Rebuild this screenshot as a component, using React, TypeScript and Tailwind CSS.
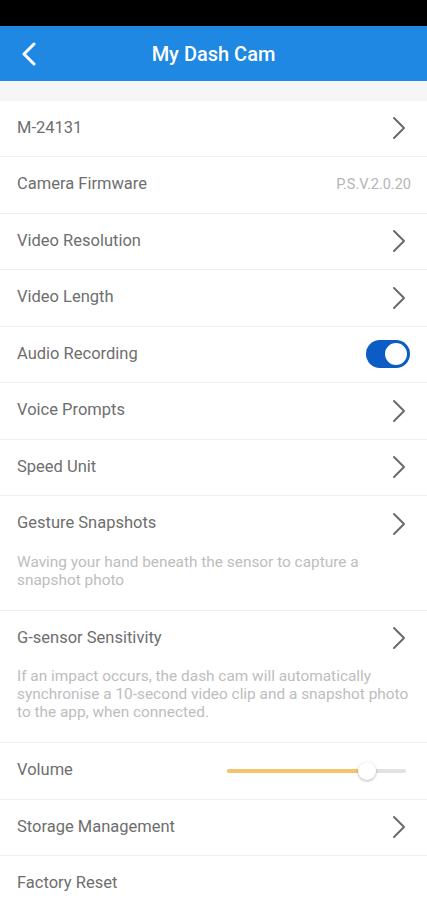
import React from "react";

const Chevron = () => (
  <svg width="14" height="24" viewBox="0 0 14 24" fill="none">
    <path d="M2 2 L12 12 L2 22" stroke="#6b6b6b" strokeWidth="2" strokeLinecap="round" strokeLinejoin="round" />
  </svg>
);

const Row = ({ label, right, desc }: { label: string; right?: React.ReactNode; desc?: string }) => (
  <div className="border-b border-[#f0f0f0]">
    <div className="h-[55.5px] flex items-center justify-between pl-[17px] pr-[21px]">
      <span className="text-[16.5px] text-[#6e6e6e]">{label}</span>
      {right}
    </div>
    {desc && (
      <div className="pl-[17px] pr-[14px] mt-[1px] pb-[21px] text-[15.4px] leading-[18px] text-[#bdbdbd]">{desc}</div>
    )}
  </div>
);

export default function App() {
  return (
    <div className="w-[427px] h-[900px] overflow-hidden bg-white" style={{ fontFamily: "Roboto, 'Noto Sans', sans-serif" }}>
      <div className="h-[26px] bg-black" />
      <div className="h-[55px] bg-[#1e88e2] relative flex items-center justify-center">
        <svg className="absolute left-[20px] top-[16px]" width="18" height="24" viewBox="0 0 18 24" fill="none">
          <path d="M14 2 L4 12 L14 22" stroke="white" strokeWidth="3" strokeLinecap="round" strokeLinejoin="round" />
        </svg>
        <span className="text-white text-[20px] font-medium">My Dash Cam</span>
      </div>
      <div className="h-[19.5px] bg-[#f6f6f6]" />
      <Row label="M-24131" right={<Chevron />} />
      <Row label="Camera Firmware" right={<span className="text-[14.5px] text-[#b5b5b5] -mr-[5px]">P.S.V.2.0.20</span>} />
      <Row label="Video Resolution" right={<Chevron />} />
      <Row label="Video Length" right={<Chevron />} />
      <Row
        label="Audio Recording"
        right={
          <div className="w-[44px] h-[28px] rounded-full bg-[#0b5cc5] relative -mr-[4px]">
            <div className="absolute right-[1px] top-[1px] w-[26px] h-[26px] rounded-full bg-white border-[2px] border-[#0b5cc5]" />
          </div>
        }
      />
      <Row label="Voice Prompts" right={<Chevron />} />
      <Row label="Speed Unit" right={<Chevron />} />
      <Row label="Gesture Snapshots" right={<Chevron />} desc="Waving your hand beneath the sensor to capture a snapshot photo" />
      <Row
        label="G-sensor Sensitivity"
        right={<Chevron />}
        desc="If an impact occurs, the dash cam will automatically synchronise a 10-second video clip and a snapshot photo to the app, when connected."
      />
      <Row
        label="Volume"
        right={
          <div className="relative w-[179px] h-[20px]">
            <div className="absolute left-0 right-0 top-[8px] h-[4px] rounded-full bg-[#e2e2e2]" />
            <div className="absolute left-0 w-[140px] top-[8px] h-[4px] rounded-full bg-[#f5c46a]" />
            <div className="absolute left-[131px] top-[1px] w-[18px] h-[18px] rounded-full bg-white shadow-[0_1px_3px_rgba(0,0,0,0.3)]" />
          </div>
        }
      />
      <Row label="Storage Management" right={<Chevron />} />
      <Row label="Factory Reset" />
    </div>
  );
}
